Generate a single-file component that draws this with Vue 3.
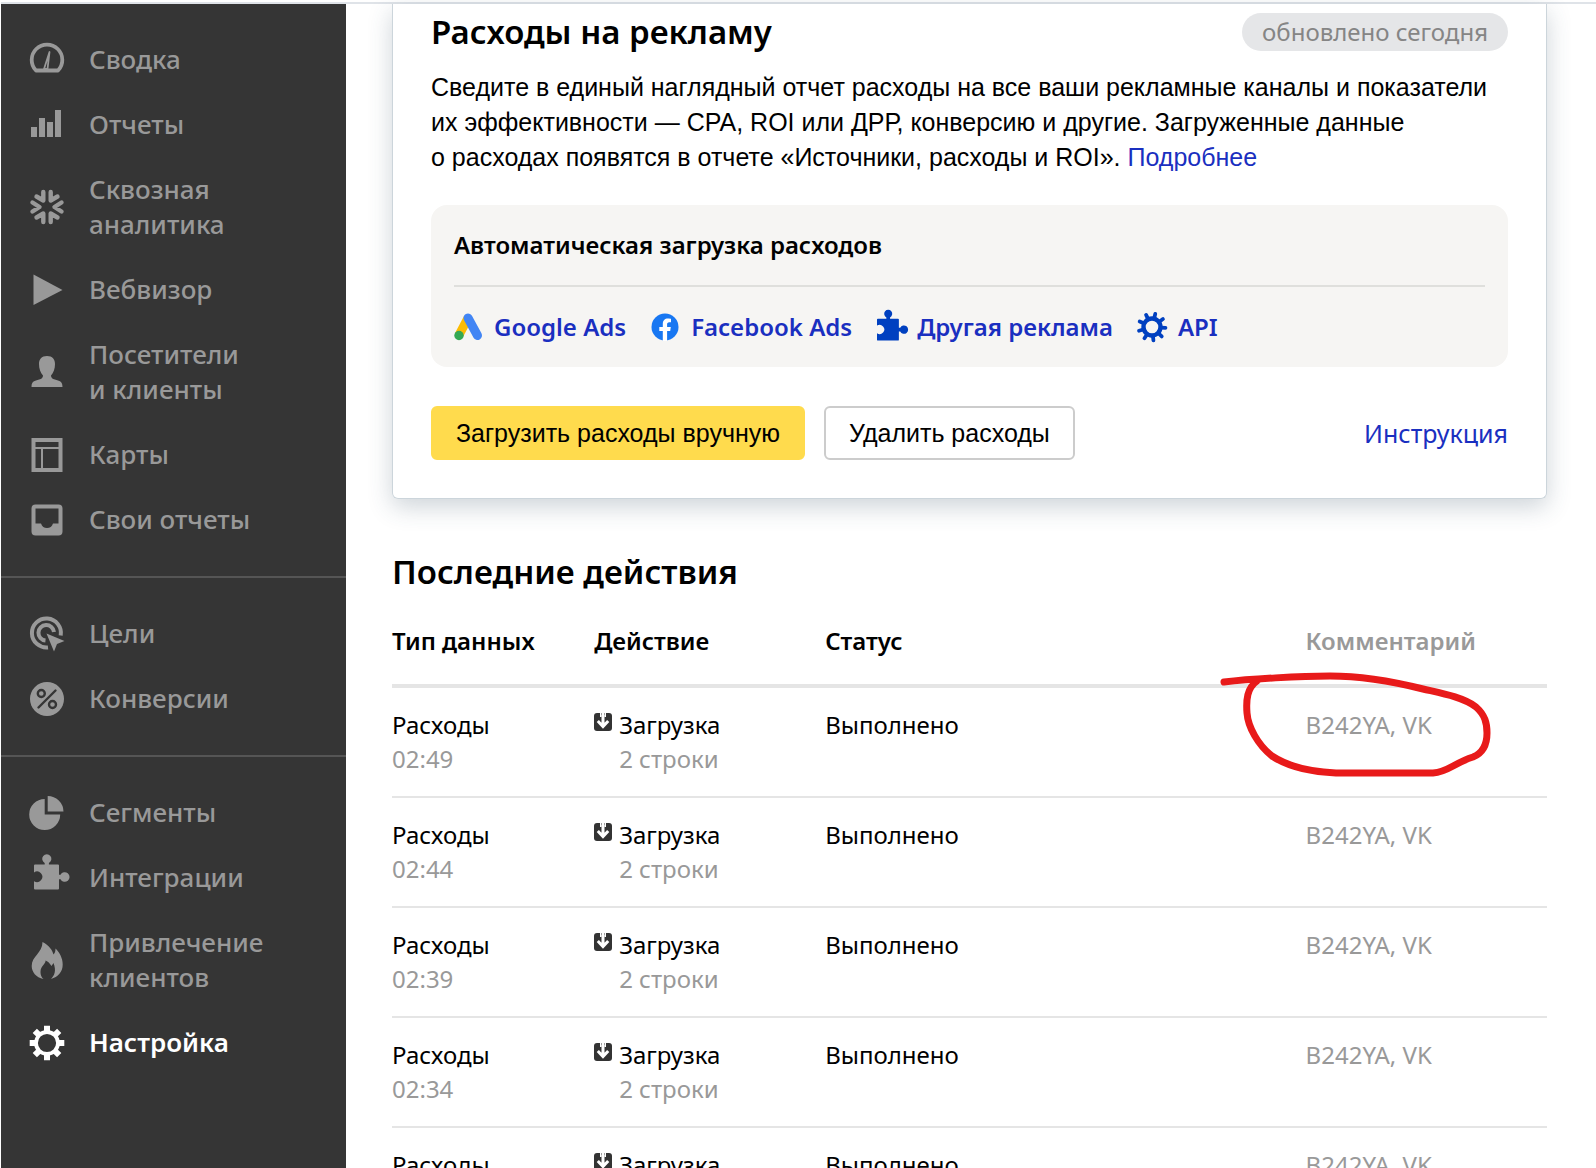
<script setup>
const menu = [
  [
    { icon: 'gauge', label: 'Сводка' },
    { icon: 'bars', label: 'Отчеты' },
    { icon: 'flow', label: 'Сквозная аналитика' },
    { icon: 'play', label: 'Вебвизор' },
    { icon: 'person', label: 'Посетители и\u00a0клиенты' },
    { icon: 'layout', label: 'Карты' },
    { icon: 'inbox', label: 'Свои отчеты' },
  ],
  [
    { icon: 'target', label: 'Цели' },
    { icon: 'percent', label: 'Конверсии' },
  ],
  [
    { icon: 'pie', label: 'Сегменты' },
    { icon: 'puzzle', label: 'Интеграции' },
    { icon: 'fire', label: 'Привлечение клиентов' },
    { icon: 'gear', label: 'Настройка', active: true },
  ],
]

// Solid shapes, 36 x 36 grid
const fills = {
  bars: 'M2 20h6v10H2zM10 11h6v19h-6zM18 15h6v15h-6zM26 3h6v27h-6z',
  play: 'M4.500 2.500L33.500 18L4.500 33z',
  person: 'M18 2c-5.500 0-8 3.500-8 8 0 5 1.500 8.500 4 11.500 0 2-1 3-3 3.800C6.500 27 2.500 26.500 2.500 33h31c0-6.500-4-6-8.500-7.700-2-.8-3-1.800-3-3.800 2.500-3 4-6.500 4-11.500 0-4.500-2.500-8-8-8z',
  layout: 'M2.500 1h31v34h-31zM6.500 5v5h23V5zM6.500 12v19h5.500V12zM14 12v19h15.500V12z',
  inbox: 'M6.500 2.500h23a4 4 0 0 1 4 4v23a4 4 0 0 1-4 4h-23a4 4 0 0 1-4-4v-23a4 4 0 0 1 4-4zM6.500 6.500v15H12c1 3 3 4.500 6 4.500s5-1.500 6-4.500h5.500v-15z',
  target: 'M17.500 17.500L35.500 25L28 28L25 35.500z',
  percent: 'M18 1a17 17 0 1 1 0 34a17 17 0 1 1 0-34z',
  pie: 'M15.700 4v15.500h15.500A15.500 15.500 0 1 1 15.700 4zM18.700 1a15.800 15.800 0 0 1 15.800 15.500H18.700z',
  puzzle: 'M5 5.500q0-1 1-1h9.700V3a4.600 4.600 0 1 1 4.200 0v1.500H29q1 0 1 1v9.300h1.500a4.800 4.800 0 1 1 0 4.400H30v9.300q0 1-1 1H6q-1 0-1-1v-7.300a5.300 5.300 0 1 0 0-8.800z',
  fire: 'M13.500 0C20 3 23.500 8.500 24.500 12.500C26 11 26.500 9 26.500 6.500C30.500 10.500 33.700 16 33.700 22.500C33.700 30 29 35 22 37C25.500 33.500 27.500 28.500 24.500 21L22.500 24C20.500 21 18.500 19 16.500 18.500C17 22 11.500 23.500 11.500 30C11.500 33 12.500 35.500 14.500 37C7 35.500 2.700 30 2.700 24C2.700 14 13.500 11 13.500 0z',
}

// Outlined shapes: path and pen width
const lines = {
  gauge: [['M7 28.500A15.300 15.300 0 1 1 29 28.500z', 3.8], ['M15 27L20.500 10L18.500 27z', 1.8]],
  flow: [['M3.500 13.500L10.500 18L3.500 22.500M32.500 13.500L25.500 18L32.500 22.500M7.500 7.500L14.300 11.500V3M28.500 7.500L21.700 11.500V3M7.500 28.500L14.300 24.500V33M28.500 28.500L21.700 24.500V33', 4.4]],
  target: [['M31.700 19.500A14.500 14.500 0 1 0 19 31.400', 4], ['M25 16A7.800 7.800 0 1 0 16.500 24.600', 4]],
  gear: [['M18 7a11 11 0 1 1 0 22a11 11 0 1 1 0-22z', 3.8], ['M18 .7v6M18 29.300v6M.7 18h6M29.300 18h6M5.800 5.800l4.400 4.400M25.800 25.800l4.400 4.400M30.200 5.800l-4.400 4.400M10.200 25.800l-4.400 4.400', 6]],
}

const services = [
  { icon: 'google', label: 'Google Ads' },
  { icon: 'facebook', label: 'Facebook Ads' },
  { icon: 'puzzle', label: 'Другая реклама' },
  { icon: 'api', label: 'API' },
]

const actions = ['02:49', '02:44', '02:39', '02:34', '02:29'].map((time) => ({
  time,
  type: 'Расходы',
  action: 'Загрузка',
  rows: '2 строки',
  status: 'Выполнено',
  comment: 'B242YA, VK',
}))
</script>

<template>
  <div class="page">
    <nav class="sidebar">
      <ul v-for="(group, g) in menu" :key="g" class="group">
        <li v-for="item in group" :key="item.label">
          <a href="#" class="item" :class="{ active: item.active }">
            <svg class="icon" viewBox="0 0 36 36" aria-hidden="true">
              <path v-if="fills[item.icon]" :d="fills[item.icon]" fill="currentColor" fill-rule="evenodd" />
              <path
                v-for="([d, width], i) in lines[item.icon] || []"
                :key="i"
                :d="d"
                :stroke-width="width"
                :stroke-linecap="item.icon === 'flow' ? 'round' : 'butt'"
                stroke-linejoin="round"
                fill="none"
                stroke="currentColor"
              />
              <g v-if="item.icon === 'percent'" class="cutout">
                <circle cx="12.300" cy="12.500" r="3.500" />
                <circle cx="23.500" cy="23.500" r="3.500" />
                <path d="M9.500 26.500L26.500 9.500" />
              </g>
            </svg>
            <span class="label">{{ item.label }}</span>
          </a>
        </li>
      </ul>
    </nav>

    <main class="content">
      <section class="card">
        <header class="card-head">
          <h1>Расходы на рекламу</h1>
          <span class="badge">обновлено сегодня</span>
        </header>
        <p class="lead">
          Сведите в единый наглядный отчет расходы на все ваши рекламные каналы и показатели<br />
          их эффективности — CPA, ROI или ДРР, конверсию и другие. Загруженные данные<br />
          о расходах появятся в отчете «Источники, расходы и ROI». <a href="#">Подробнее</a>
        </p>

        <div class="panel">
          <h2>Автоматическая загрузка расходов</h2>
          <div class="services">
            <a v-for="s in services" :key="s.label" href="#" class="service">
              <svg v-if="s.icon === 'google'" class="logo" viewBox="0 0 28 28" aria-hidden="true">
                <path d="M14 5L5 22" stroke="#fbbc04" stroke-width="9" />
                <path d="M14 5L23.500 22.500" stroke="#4285f4" stroke-width="9" stroke-linecap="round" />
                <circle cx="5" cy="22.500" r="4.700" fill="#34a853" />
              </svg>
              <svg v-else-if="s.icon === 'facebook'" class="logo" viewBox="0 0 28 28" aria-hidden="true">
                <circle cx="14" cy="14" r="13.500" fill="#1877f2" />
                <path d="M11.800 28v-10H8.300v-4h3.500v-3c0-3.600 2-5.500 5.200-5.500 1.500 0 3 .3 3 .3v3.400h-1.700c-1.700 0-2.200 1-2.200 2.100V14h3.700l-.6 4h-3.100v10z" fill="#fff" />
              </svg>
              <svg v-else-if="s.icon === 'puzzle'" class="logo" viewBox="5 -2 32 32" aria-hidden="true">
                <path :d="fills.puzzle" fill="#0040c0" fill-rule="evenodd" />
              </svg>
              <svg v-else class="logo" viewBox="0 0 28 28" aria-hidden="true">
                <circle cx="14" cy="14" r="8.500" fill="none" stroke="#0040c0" stroke-width="4.400" />
                <path
                  v-for="n in 9"
                  :key="n"
                  d="M14 5V0.500"
                  stroke="#0040c0"
                  stroke-width="3.800"
                  stroke-linecap="round"
                  :transform="`rotate(${n * 40 + 14} 14 14)`"
                />
              </svg>
              {{ s.label }}
            </a>
          </div>
        </div>

        <div class="buttons">
          <button type="button" class="btn primary">Загрузить расходы вручную</button>
          <button type="button" class="btn">Удалить расходы</button>
          <a href="#" class="guide">Инструкция</a>
        </div>
      </section>

      <section class="history">
        <h1>Последние действия</h1>
        <table>
          <colgroup>
            <col class="c-type" />
            <col class="c-action" />
            <col class="c-status" />
            <col />
          </colgroup>
          <thead>
            <tr>
              <th>Тип данных</th>
              <th>Действие</th>
              <th>Статус</th>
              <th class="muted">Комментарий</th>
            </tr>
          </thead>
          <tbody>
            <tr v-for="(row, i) in actions" :key="row.time">
              <td>{{ row.type }}<br /><span class="muted">{{ row.time }}</span></td>
              <td>
                <div class="action">
                  <svg class="load" viewBox="0 0 18 18" aria-hidden="true">
                    <rect width="18" height="18" rx="3" fill="#333" />
                    <path d="M6 0h6v4h-6z" fill="#fff" />
                    <path d="M7.500 0v4M10.500 0v4" stroke="#888" stroke-width="0.800" />
                    <path d="M9 2v10M3.800 8L9 13.500L14.200 8" fill="none" stroke="#fff" stroke-width="3" />
                  </svg>
                  <span>{{ row.action }}<br /><span class="muted">{{ row.rows }}</span></span>
                </div>
              </td>
              <td>{{ row.status }}</td>
              <td class="muted comment">
                {{ row.comment }}
                <svg v-if="i === 0" class="mark" viewBox="30 60 275 110" aria-hidden="true">
                  <path d="M34 72C60 69 110 66 140 66S205 72 233 79C250 83 273 87 286 97C295 105 297 113 297 123C297 135 293 143 283 147C264 153 258 162 243 163H146C125 162 100 158 82 146C68 135 58 117 57 103C56 90 57 78 67 71" />
                </svg>
              </td>
            </tr>
          </tbody>
        </table>
      </section>
    </main>
  </div>
</template>

<style>
body {
  background: #fff;
}
</style>

<style scoped>
.page {
  box-sizing: border-box;
  display: flex;
  height: 100vh;
  padding: 2px 0 0 1px;
  overflow: hidden;
  color: #000;
  font: 24px/34px "Noto Sans", sans-serif;
}
a {
  color: #1a2fc0;
  text-decoration: none;
}
h1 {
  margin: 0;
  font-size: 33px;
  font-weight: 600;
  line-height: 44px;
}
.muted {
  color: #999;
}

.sidebar {
  flex: 0 0 345px;
  box-sizing: border-box;
  border-top: 2px solid #dfe3e8;
  background: #353535;
}
.group {
  margin: 0;
  padding: 23px 0 24px;
  list-style: none;
}
.group + .group {
  border-top: 2px solid #555;
}
.item {
  display: flex;
  align-items: center;
  gap: 24px;
  padding: 15px 64px 15px 28px;
  color: #999;
  font-size: 26px;
  font-weight: 500;
  line-height: 35px;
}
.item.active {
  color: #fff;
  font-weight: 600;
}
.icon {
  flex: none;
  width: 36px;
  height: 36px;
  margin: -2px 0;
  overflow: visible;
}
.cutout {
  fill: none;
  stroke: #353535;
  stroke-width: 2.4px;
  stroke-linecap: round;
}

.content {
  flex: 1;
  min-width: 0;
  padding: 0 49px 0 46px;
  border-top: 2px solid #dfe3e8;
}
.card {
  padding: 6px 38px 38px;
  border: solid #ccd5db;
  border-width: 0 1px 1px;
  border-radius: 0 0 6px 6px;
  box-shadow: 0 8px 24px rgba(50, 75, 95, 0.24);
}
.card-head {
  display: flex;
  align-items: center;
  justify-content: space-between;
}
.badge {
  padding: 2px 20px;
  border-radius: 19px;
  background: #e5e6e8;
  color: #858585;
}
.lead {
  margin: 16px 0 30px;
  font-family: "Liberation Sans", Arial, sans-serif;
  font-size: 25px;
  line-height: 35px;
  white-space: nowrap;
}
.panel {
  padding: 0 23px;
  border-radius: 16px;
  background: #f6f5f3;
}
.panel h2 {
  margin: 0;
  padding: 22px 0;
  border-bottom: 2px solid #dfdfdc;
  font-size: 24px;
  font-weight: 600;
  line-height: 36px;
}
.services {
  display: flex;
  gap: 25px;
  padding: 23px 0;
}
.service {
  display: flex;
  align-items: center;
  gap: 12px;
  font-weight: 600;
}
.logo {
  width: 28px;
  height: 28px;
  fill: none;
  overflow: visible;
}
.buttons {
  display: flex;
  align-items: center;
  gap: 19px;
  margin-top: 39px;
}
.btn {
  box-sizing: border-box;
  height: 54px;
  padding: 0 23px;
  border: 2px solid #ccc;
  border-radius: 6px;
  background: #fff;
  color: #000;
  font: 25px/34px "Liberation Sans", Arial, sans-serif;
}
.btn.primary {
  border-color: #ffdb4d;
  background: #ffdb4d;
}
.guide {
  margin-left: auto;
  font-size: 25px;
}

.history {
  margin-top: 51px;
}
table {
  width: 100%;
  margin-top: 26px;
  border-collapse: collapse;
  table-layout: fixed;
}
.c-type {
  width: 17.5%;
}
.c-action {
  width: 20%;
}
.c-status {
  width: 41.6%;
}
th,
td {
  padding: 0;
  text-align: left;
  vertical-align: top;
}
th {
  padding: 4px 0 26px;
  border-bottom: 4px solid #e5e5e5;
  font-weight: 600;
}
td {
  padding: 20px 0;
  border-bottom: 2px solid #e5e5e5;
}
.action {
  display: flex;
  align-items: flex-start;
  gap: 7px;
}
.load {
  width: 18px;
  height: 18px;
  margin-top: 5px;
}
.comment {
  position: relative;
}
.mark {
  position: absolute;
  top: -18px;
  left: -86px;
  width: 275px;
  height: 110px;
  fill: none;
  stroke: #e81a1a;
  stroke-width: 7px;
  stroke-linecap: round;
  stroke-linejoin: round;
}
</style>
